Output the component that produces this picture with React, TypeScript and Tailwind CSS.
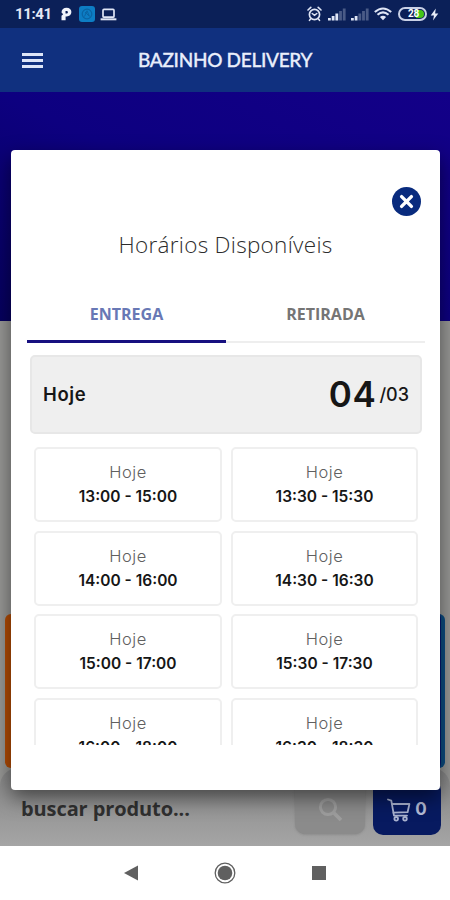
const slots = [
  { id: 1, time: "13:00 - 15:00" },
  { id: 2, time: "13:30 - 15:30" },
  { id: 3, time: "14:00 - 16:00" },
  { id: 4, time: "14:30 - 16:30" },
  { id: 5, time: "15:00 - 17:00" },
  { id: 6, time: "15:30 - 17:30" },
  { id: 7, time: "16:00 - 18:00" },
  { id: 8, time: "16:30 - 18:30" },
];

const Signal = ({ level }: { level: number }) => (
  <svg width="18" height="13" viewBox="0 0 18 13" fill="#dfe5f5">
    <rect x="0" y="10" width="2.8" height="2.5" />
    <rect x="3.7" y="8" width="2.8" height="4.5" />
    <rect x="7.4" y="5.5" width="2.8" height="7" opacity={level > 2 ? 1 : 0.3} />
    <rect x="11.1" y="3" width="2.8" height="9.5" opacity="0.3" />
    <rect x="14.8" y="0.5" width="2.8" height="12" opacity="0.3" />
  </svg>
);

const StatusBar = () => (
  <div className="flex h-7 shrink-0 items-center bg-[#0b2058] pl-[15px] pr-[11px] text-[#e3e8f5]">
    <span className="w-[37px] whitespace-nowrap font-['Roboto'] text-[15px] font-bold tracking-[-0.4px]">11:41</span>
    <svg className="ml-[9px]" width="11" height="14" viewBox="0 0 11 14">
      <path fillRule="evenodd" fill="#f1f4fb" d="M0.5 5.4C0.5 2.5 2.6 0.8 5.6 0.8C8.5 0.8 10.4 2.5 10.4 5.1C10.4 7.8 8.4 9.4 5.7 9.4H4.6V13.2H0.5V8.8L2.2 7.2ZM4.5 4V6.6H5.4C6.3 6.6 6.9 6.1 6.9 5.3C6.9 4.4 6.3 4 5.4 4Z" />
    </svg>
    <svg className="ml-[7px]" width="16" height="16" viewBox="0 0 16 16" fill="none">
      <rect width="16" height="16" rx="3" fill="#0d7dc4" />
      <circle cx="8" cy="8" r="4.8" stroke="#0a64a4" strokeWidth="1.2" />
      <path d="M5.5 10.5L8 4.8L10.5 10.5M6 6L10 10" stroke="#0a64a4" strokeWidth="1" />
    </svg>
    <svg className="ml-[5px]" width="17" height="13" viewBox="0 0 17 13" fill="none">
      <rect x="3" y="1.4" width="11" height="7.8" rx="1" stroke="#dfe5f5" strokeWidth="1.7" />
      <path d="M0.6 11.3H16.4" stroke="#dfe5f5" strokeWidth="2" />
    </svg>
    <div className="ml-auto flex items-center">
      <svg width="15" height="16" viewBox="0 0 15 16" fill="none" stroke="#dfe5f5" strokeLinecap="round">
        <circle cx="7.5" cy="8.5" r="5.1" strokeWidth="1.7" />
        <path d="M1 4L3.8 1.4M14 4L11.2 1.4M3.5 13L2.5 14.4M11.5 13L12.5 14.4" strokeWidth="1.6" />
        <path d="M5.2 7.5L7.5 9.4L9.8 7.5" strokeWidth="1.5" />
      </svg>
      <span className="ml-[6px]"><Signal level={3} /></span>
      <span className="ml-[5px]"><Signal level={2} /></span>
      <svg className="ml-[5px]" width="18" height="14" viewBox="0 0 18 14" fill="none" stroke="#dfe5f5">
        <path d="M0.8 5Q9 -2 17.2 5" strokeWidth="2.1" />
        <path d="M3.5 7.7Q9 2.9 14.5 7.7" strokeWidth="2.1" />
        <path d="M5.9 10Q9 7.4 12.1 10L9 13.3Z" fill="#dfe5f5" stroke="none" />
      </svg>
      <div className="ml-[6px] flex h-[14px] w-[29px] items-center justify-end rounded-full border-2 border-[#c9d1e6] p-[1px]">
        <span className="z-10 -mr-[3px] font-['Roboto'] text-[10px] font-bold leading-none tracking-tight text-white">28</span>
        <span className="h-full w-[8px] rounded-r-full bg-[#43c516]" />
      </div>
      <svg className="ml-[3px]" width="9" height="13" viewBox="0 0 9 13" fill="#e8ecf7">
        <path d="M5.8 0.5L0.7 7.4H4L3 12.5L8.3 5.4H5.1Z" />
      </svg>
    </div>
  </div>
);

const CartIcon = () => (
  <svg width="24" height="24" viewBox="0 0 24 24" fill="none" stroke="#aab3d0" strokeWidth="1.8" strokeLinecap="round" strokeLinejoin="round">
    <path d="M1 1.5L4.3 2.7L7 17.6H20" />
    <path d="M5 6H22.4L20.6 14.2L6.5 14.6" />
    <circle cx="9.2" cy="20.8" r="1.8" />
    <circle cx="18" cy="20.8" r="1.8" />
  </svg>
);

const Slot = ({ time }: { time: string }) => (
  <div className="flex h-[75px] flex-col items-center rounded-[5px] border-2 border-[#efefef] pt-[11px]">
    <span className="font-['Inter'] text-[16.5px] font-light leading-6 tracking-[0.5px] text-[#606060]">Hoje</span>
    <span className="mt-px whitespace-nowrap font-['Inter'] text-[15.5px] font-semibold leading-6 text-[#161616]">
      {time}
    </span>
  </div>
);

const ScheduleModal = () => (
  <div className="absolute left-[11px] top-[150px] flex h-[640px] w-[429px] flex-col rounded-[4px] bg-white px-4 shadow-[0_8px_20px_rgba(0,0,0,0.5)]">
    <div className="flex h-[66px] items-end justify-end pr-[3px]">
      <button className="flex size-[29px] items-center justify-center rounded-full bg-[#092b7e]">
        <svg width="15" height="15" viewBox="0 0 15 15" stroke="#fff" strokeWidth="3.4" strokeLinecap="round">
          <path d="M2.6 2.6L12.4 12.4M12.4 2.6L2.6 12.4" />
        </svg>
      </button>
    </div>
    <h2 className="mt-[13px] text-center font-['Open_Sans'] text-[22.5px] font-light leading-8 tracking-[0.3px] text-[#2c2c2c]">
      Horários Disponíveis
    </h2>
    <div className="mt-[25px] flex h-[57px] w-[398px] items-stretch font-['Open_Sans'] text-[16px] font-bold">
      <div className="flex flex-1 items-center justify-center border-b-[3px] border-[#171080] pt-px text-[#6878b5]">ENTREGA</div>
      <div className="flex flex-1 items-center justify-center border-b-2 border-[#eee] text-[#757575]">RETIRADA</div>
    </div>
    <div className="ml-[3px] mt-[12px] flex h-[79px] w-[392px] shrink-0 items-center justify-between rounded-[5px] border-2 border-[#e7e7e7] bg-[#efefef] px-[11px] font-['Inter'] text-[#161616]">
      <span className="text-[18.5px] font-semibold tracking-[0.6px]">Hoje</span>
      <div className="flex items-center">
        <span className="text-[35px] font-semibold tracking-[0.6px]">04</span>
        <span className="ml-[3px] text-[18px] font-medium">/03</span>
      </div>
    </div>
    <div className="ml-[7px] mt-[13px] h-[298px] w-[384px] overflow-hidden">
      <div className="grid grid-cols-[188px_187px] gap-x-[9px] gap-y-[8.5px]">
        {slots.map((slot) => (
          <Slot key={slot.id} time={slot.time} />
        ))}
      </div>
    </div>
  </div>
);

export default function App() {
  return (
    <div className="relative flex h-[900px] w-[450px] flex-col overflow-hidden bg-white">
      <StatusBar />
      <header className="grid h-16 shrink-0 grid-cols-[1fr_auto_1fr] items-center bg-[#10307f] px-[22px] text-[#e9eefb]">
        <button className="flex w-[21px] flex-col gap-[3px]">
          <span className="h-[3px] bg-[#dde5f8]" />
          <span className="h-[3px] bg-[#dde5f8]" />
          <span className="h-[3px] bg-[#dde5f8]" />
        </button>
        <h1 className="font-['Lato'] text-[19px] font-medium tracking-[-0.3px] [-webkit-text-stroke:0.3px_#e9eefb]">BAZINHO DELIVERY</h1>
      </header>
      <div className="h-[229px] shrink-0 bg-linear-to-tr from-[#06005e] via-[#0d0080] to-[#130088]" />
      <main className="flex h-[525px] shrink-0 flex-col bg-[#979795]">
        <div className="mt-[293px] flex h-[154px] shrink-0 justify-between px-[5px]">
          <div className="w-[210px] rounded-[6px] bg-[#b24b05]" />
          <div className="w-[210px] rounded-[6px] border-r-4 border-[#0b4b80] bg-[#06166f]" />
        </div>
        <div className="flex h-[78px] items-start rounded-t-[18px] bg-linear-to-b from-[#858585] to-[#a5a5a5] pl-[21px] pr-[9px] pt-[12px]">
          <span className="pt-[15px] font-['Open_Sans'] text-[20px] font-bold leading-7 tracking-[-0.1px] text-[#303030]">buscar produto...</span>
          <div className="ml-auto flex h-[54px] w-[70px] items-end justify-center rounded-[10px] bg-[#8b8b8b] pb-[12px] shadow-sm">
            <svg width="25" height="25" viewBox="0 0 25 25" fill="none" stroke="#9e9e9e">
              <circle cx="10" cy="10" r="7.6" strokeWidth="3" />
              <path d="M15.5 15.5L23 23" strokeWidth="3.8" />
            </svg>
          </div>
          <div className="ml-[8px] flex h-[55px] w-[68px] items-end justify-center gap-[4px] rounded-[10px] bg-[#071a60] pb-[13px]">
            <CartIcon />
            <span className="font-['Inter'] text-[17px] font-bold leading-[25px] text-[#b4bcd6]">0</span>
          </div>
        </div>
      </main>
      <nav className="flex h-[54px] shrink-0 items-center justify-between bg-white px-[124px]">
        <svg width="14" height="16" viewBox="0 0 14 16" fill="#606060">
          <path d="M0 8L14 0.5V15.5Z" />
        </svg>
        <svg width="22" height="22" viewBox="0 0 22 22" fill="none">
          <circle cx="11" cy="11" r="9.8" stroke="#606060" strokeWidth="1.3" />
          <circle cx="11" cy="11" r="7.3" fill="#606060" />
        </svg>
        <div className="size-[14px] bg-[#606060]" />
      </nav>
      <ScheduleModal />
    </div>
  );
}
